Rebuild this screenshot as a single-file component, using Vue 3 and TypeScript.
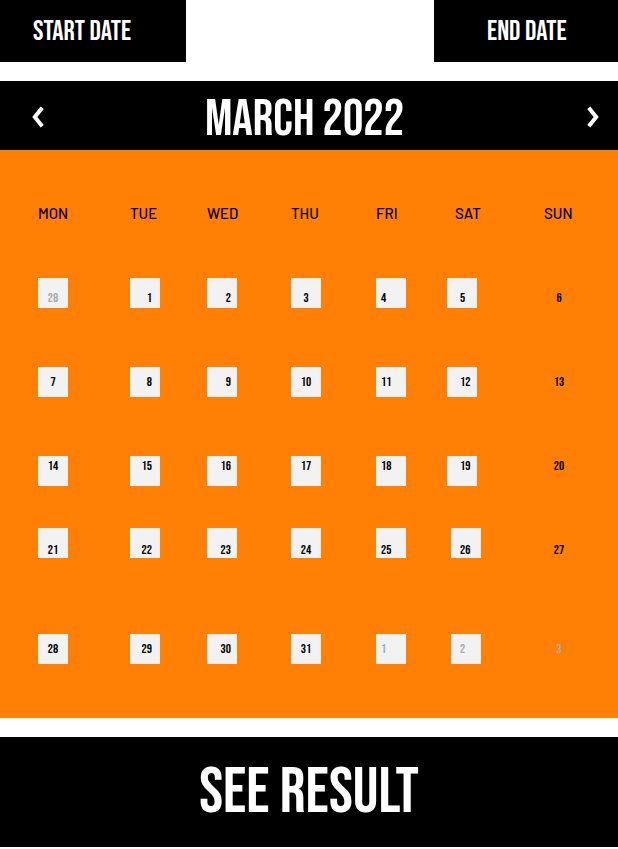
<script setup lang="ts">
import { computed, ref } from 'vue'

interface Day {
  label: number
  muted: boolean
}

const first = new Date(2022, 1, 28)
const month = ref('March 2022')
const weekdays = ['Mon', 'Tue', 'Wed', 'Thu', 'Fri', 'Sat', 'Sun']

const weeks = computed<Day[][]>(() =>
  Array.from({ length: 5 }, (_, w) =>
    Array.from({ length: 7 }, (_, d) => {
      const date = new Date(first.getFullYear(), first.getMonth(), first.getDate() + w * 7 + d)
      return { label: date.getDate(), muted: date.getMonth() !== 2 }
    }),
  ),
)
</script>

<template>
  <main class="picker">
    <div class="range">
      <button type="button" class="tab start">Start date</button>
      <button type="button" class="tab end">End date</button>
    </div>

    <header class="month">
      <button type="button" class="arrow" aria-label="Previous month">
        <svg width="12" height="22" viewBox="0 0 12 22" fill="none" stroke="#fff" stroke-width="4">
          <path d="M10.2 1.8 2.8 11l7.4 9.2" />
        </svg>
      </button>
      <h1>{{ month }}</h1>
      <button type="button" class="arrow" aria-label="Next month">
        <svg width="12" height="22" viewBox="0 0 12 22" fill="none" stroke="#fff" stroke-width="4">
          <path d="M1.8 1.8 9.2 11l-7.4 9.2" />
        </svg>
      </button>
    </header>

    <table class="calendar">
      <thead>
        <tr>
          <th v-for="name in weekdays" :key="name" scope="col">{{ name }}</th>
        </tr>
      </thead>
      <tbody>
        <tr v-for="(week, w) in weeks" :key="w" :class="'week-' + (w + 1)">
          <td v-for="(day, d) in week" :key="d">
            <button type="button" class="day" :class="{ muted: day.muted }">{{ day.label }}</button>
          </td>
        </tr>
      </tbody>
    </table>

    <button type="button" class="result">See result</button>
  </main>
</template>

<style>
body {
  margin: 0;
  background: #fff;
}
</style>

<style scoped>
.picker {
  display: flex;
  flex-direction: column;
  gap: 19px;
  font-family: "Bebas Neue", "Liberation Sans Narrow", "Liberation Sans", sans-serif;
  text-transform: uppercase;
}

button {
  margin: 0;
  padding: 0;
  border: 0;
  border-radius: 0;
  font-family: inherit;
  font-weight: 400;
  text-transform: inherit;
  cursor: pointer;
}

.range {
  display: grid;
  grid-template-columns: 186fr 184fr;
  column-gap: 40%;
}

.tab {
  height: 62px;
  background: #000;
  color: #fff;
  font-size: 28px;
}

.start {
  padding-left: 33px;
  text-align: left;
}

.end {
  padding-left: 2px;
}

.month {
  display: flex;
  align-items: center;
  justify-content: space-between;
  height: 69px;
  padding: 3px 19px 0 32px;
  box-sizing: border-box;
  background: #000;
  color: #fff;
}

.month h1 {
  margin: 0;
  padding: 5px 22px 0 0;
  font-size: 51px;
  font-weight: 400;
  line-height: 60px;
}

.arrow {
  display: flex;
  background: none;
}

.calendar {
  display: block;
  margin-top: -19px;
  padding: 53px 0 54px 38px;
  background: #ff8005;
  color: #000;
}

thead,
tbody {
  display: block;
}

tr {
  display: grid;
  grid-template-columns: 92fr 77fr 84fr 85fr 71fr 97fr 74fr;
}

th,
td {
  padding: 0;
  text-align: left;
}

th {
  font-family: "DIN", "D-DIN", "Bahnschrift", "Barlow", Roboto, sans-serif;
  font-size: 15px;
  font-weight: 500;
  line-height: 20px;
}

th:nth-child(6) {
  padding-left: 8px;
}

.day {
  display: block;
  width: 30px;
  height: 30px;
  box-sizing: border-box;
  background: #f2f2f2;
  color: #000;
  font-size: 13px;
  line-height: 16px;
  text-align: center;
}

.muted {
  color: #aaa;
}

td:nth-child(2) .day {
  padding-right: 8px;
  text-align: right;
}

td:nth-child(3) .day {
  padding-right: 6px;
  text-align: right;
}

td:nth-child(5) .day {
  padding-left: 5px;
  text-align: left;
}

td:nth-child(6) .day {
  padding-left: 13px;
  text-align: left;
}

td:nth-child(7) .day {
  background: none;
}

.week-1 {
  padding-top: 55px;
}

.week-2,
.week-3 {
  padding-top: 59px;
}

.week-4 {
  padding-top: 42px;
}

.week-5 {
  padding-top: 76px;
}

.week-1 .day {
  padding-top: 10px;
}

.week-3 .day {
  padding-bottom: 10px;
}

.week-4 .day {
  padding-top: 14px;
}

.week-4 td:nth-child(6),
.week-5 td:nth-child(6) {
  padding-left: 4px;
}

.week-4 td:nth-child(6) .day,
.week-5 td:nth-child(6) .day {
  padding-left: 9px;
}

.result {
  height: 110px;
  background: #000;
  color: #fff;
  font-size: 64px;
}
</style>
